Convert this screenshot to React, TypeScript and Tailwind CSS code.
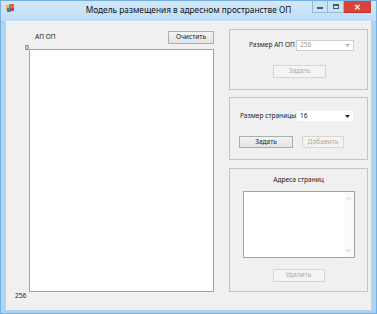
import { ChevronUp, ChevronDown } from "lucide-react";
import clsx from "clsx";

type BtnProps = {
  label: string;
  disabled?: boolean;
  className?: string;
};

const WinButton = ({ label, disabled, className }: BtnProps) => (
  <div
    className={clsx(
      "shrink-0 flex items-center justify-center border text-[6.6px] leading-none whitespace-nowrap",
      disabled
        ? "border-[#d6d6d6] bg-[#f4f4f4] text-[#ababab]"
        : "border-[#adadad] bg-linear-to-b from-[#f3f3f3] to-[#e3e3e3] text-[#222]",
      className
    )}
  >
    {label}
  </div>
);

type ComboProps = {
  value: string;
  disabled?: boolean;
  className?: string;
};

const Combo = ({ value, disabled, className }: ComboProps) => (
  <div
    className={clsx(
      "shrink-0 flex items-center bg-white text-[6.6px] leading-none pl-[3px] pr-[3px]",
      disabled ? "border border-[#cfcfcf] text-[#9a9a9a]" : "text-[#222]",
      className
    )}
  >
    <span className="flex-1">{value}</span>
    <svg width="5" height="3" viewBox="0 0 5 3">
      <path d="M0 0h5L2.5 3z" fill={disabled ? "#b5b5b5" : "#222"} />
    </svg>
  </div>
);

const AppIcon = () => (
  <svg width="9" height="8" viewBox="0 0 9 8">
    <rect x="0" y="1" width="6" height="5" fill="#f3b23c" />
    <rect x="3" y="0" width="5" height="4" fill="#e8642c" />
    <rect x="1" y="4" width="4" height="4" fill="#3a7fd0" />
    <rect x="5" y="4" width="3" height="3" fill="#d33b2e" />
  </svg>
);

export default function App() {
  return (
    <div className="w-[377px] h-[314px] flex flex-col bg-[#aed4f2] border border-[#74b0e2] font-['Noto_Sans','Open_Sans',sans-serif] text-[#222] overflow-hidden">
      {/* title bar */}
      <div className="h-[20px] flex bg-linear-to-b from-[#d3e7f8] to-[#c0ddf5]">
        <div className="w-[64px] pl-[5px] pt-[3px]">
          <AppIcon />
        </div>
        <div className="flex-1 text-center text-[8.3px] leading-none pt-[5px] text-[#111] whitespace-nowrap">
          Модель размещения в адресном пространстве ОП
        </div>
        <div className="w-[64px] flex justify-end items-start pr-[5px]">
          <div className="w-[16px] h-[12px] border-x border-b border-[#8ebbe0] bg-[#c9e2f6] flex items-end justify-center pb-[3px]">
            <div className="w-[6px] h-[2px] bg-[#4a5a6a]" />
          </div>
          <div className="w-[16px] h-[12px] border-r border-b border-[#8ebbe0] bg-[#c9e2f6] flex items-center justify-center">
            <div className="w-[6px] h-[5px] border border-[#4a5a6a] border-t-2" />
          </div>
          <div className="w-[27px] h-[12px] bg-[#d9443a] border-b border-[#b3362e] flex items-center justify-center text-white text-[8px] font-bold leading-none">
            ✕
          </div>
        </div>
      </div>

      {/* body */}
      <div className="flex-1 flex px-[5px] pb-[3px]">
        <div className="flex-1 flex bg-[#f0f0f0] border-t border-[#fafafa]">
          {/* left column */}
          <div className="w-[208px] flex flex-col pt-[9px]">
            <div className="flex items-center h-[13px]">
              <span className="pl-[29px] text-[6.6px] leading-none whitespace-nowrap">АП ОП</span>
              <WinButton label="Очистить" className="ml-auto w-[46px] h-[13px]" />
            </div>
            <div className="flex mt-[5px]">
              <span className="w-[23px] pl-[19px] -mt-[4px] text-[6.6px] leading-none">0</span>
              <div className="w-[185px] h-[243px] bg-white border border-[#a3a3a3]" />
            </div>
            <span className="pl-[9px] mt-[1px] text-[6.6px] leading-none">256</span>
          </div>

          {/* right column */}
          <div className="ml-[15px] w-[139px] flex flex-col pt-[7px]">
            <div className="h-[61px] border border-[#c4c4c4] flex flex-col pt-[10px]">
              <div className="flex items-center">
                <span className="pl-[19px] text-[6.6px] leading-none whitespace-nowrap">Размер АП ОП</span>
                <Combo value="256" disabled className="ml-auto mr-[13px] w-[58px] h-[11px]" />
              </div>
              <WinButton label="Задать" disabled className="mt-[14px] ml-[43px] w-[53px] h-[13px]" />
            </div>

            <div className="mt-[7px] h-[63px] border border-[#c4c4c4] flex flex-col pt-[13px]">
              <div className="flex items-center">
                <span className="pl-[10px] text-[6.6px] leading-none whitespace-nowrap">Размер страницы</span>
                <Combo value="16" className="ml-auto mr-[14px] w-[56px] h-[10px]" />
              </div>
              <div className="flex mt-[15px] pl-[9px] gap-[9px]">
                <WinButton label="Задать" className="w-[54px] h-[12px]" />
                <WinButton label="Добавить" disabled className="w-[42px] h-[12px]" />
              </div>
            </div>

            <div className="mt-[8px] h-[124px] border border-[#c4c4c4] flex flex-col items-center pt-[8px]">
              <span className="text-[6.6px] leading-none whitespace-nowrap">Адреса страниц</span>
              <div className="mt-[7px] w-[112px] h-[67px] bg-white border border-[#a3a3a3] flex justify-end">
                <div className="w-[11px] flex flex-col justify-between items-center py-[3px] bg-[#fbfbfb]">
                  <ChevronUp size={7} color="#b0b0b0" strokeWidth={2.5} />
                  <ChevronDown size={7} color="#b0b0b0" strokeWidth={2.5} />
                </div>
              </div>
              <WinButton label="Удалить" disabled className="mt-[11px] w-[52px] h-[13px]" />
            </div>
          </div>
        </div>
      </div>
    </div>
  );
}
